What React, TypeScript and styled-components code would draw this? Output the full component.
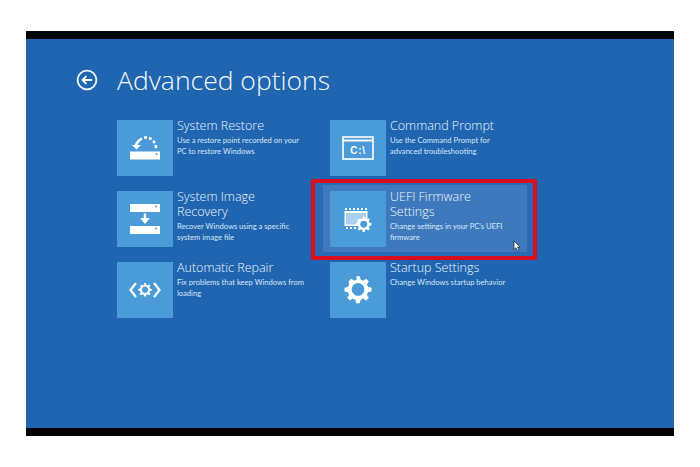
import * as React from 'react';
import styled, { createGlobalStyle } from 'styled-components';

const GlobalStyle = createGlobalStyle`
    html, body {
        margin: 0;
        background: #ffffff;
        font-family: "Open Sans", "Liberation Sans", sans-serif;
    }
`;

const BackIcon = () => (
    <svg width="22" height="22" viewBox="0 0 22 22" fill="none" stroke="#f2f7fc" strokeWidth="1.8">
        <circle cx="11" cy="11" r="9.4" />
        <path d="M16.2 11H6.6M10.4 7l-4 4 4 4" />
    </svg>
);

const RestoreIcon = () => (
    <svg width="32" height="24" viewBox="0 1 32 24" fill="#fff">
        <path d="M1 16.5h30v8H1z" />
        <circle cx="27.5" cy="19" r="0.9" fill="#4a9bd8" />
        <path d="M7.5 14.5 3 10h2.700C6.800 6.500 9.300 3.700 12.500 2.500l1 2.300C11.300 5.700 9.500 7.600 8.600 10h3.400z" />
        <path d="M15 1.200h3v2.500h-3zM20.400 1.800l2.800 1.300-1.100 2.200-2.700-1.200zM25 5l1.900 2.300-2 1.500-1.700-2zM27.600 9.800l.8 3-2.400.6-.7-2.800z" />
    </svg>
);

const ImageRecoveryIcon = () => (
    <svg width="32" height="32" viewBox="0 0 32 32" fill="#fff">
        <path d="M1 1h30v8H1z" />
        <path d="M1 23h30v8H1z" />
        <circle cx="27" cy="3.5" r="0.9" fill="#4a9bd8" />
        <circle cx="27" cy="25.5" r="0.9" fill="#4a9bd8" />
        <path d="M14.800 10.500h2.400v4.500h3.800L16 21l-5-6h3.800z" />
    </svg>
);

const gearPath =
    'M10.4 1h3.200l.6 3a8.500 8.500 0 0 1 2.300 1l2.600-1.700 2.300 2.300-1.700 2.600a8.500 8.500 0 0 1 1 2.300l3 .6v3.200l-3 .6a8.500 8.500 0 0 1-1 2.300l1.700 2.600-2.300 2.300-2.600-1.700a8.500 8.500 0 0 1-2.300 1l-.6 3h-3.200l-.6-3a8.500 8.500 0 0 1-2.300-1l-2.600 1.700-2.300-2.300 1.700-2.600a8.500 8.500 0 0 1-1-2.300l-3-.6v-3.200l3-.6a8.500 8.500 0 0 1 1-2.300L3.800 5.600l2.300-2.300 2.600 1.700a8.500 8.500 0 0 1 2.300-1z M12 7a5.500 5.500 0 1 0 .01 0z';

const RepairIcon = () => (
    <svg width="32" height="18" viewBox="0 0 32 18" fill="none">
        <path d="M7 2 1.500 9 7 16M25 2l5.500 7L25 16" stroke="#fff" strokeWidth="2.200" />
        <svg x="8.500" y="1.500" width="15" height="15" viewBox="0 0 24 26">
            <path d={gearPath} fill="#fff" fillRule="evenodd" />
        </svg>
    </svg>
);

const CommandIcon = () => (
    <svg width="32" height="24" viewBox="0 0 32 24" fill="none">
        <rect x="1" y="1" width="30" height="22" stroke="#fff" strokeWidth="1.600" />
        <path d="M1 4.500h30" stroke="#fff" strokeWidth="2" />
        <text x="16" y="17.500" textAnchor="middle" fill="#fff" fontSize="10" fontWeight="700" letterSpacing="0.800" fontFamily="Liberation Sans, sans-serif">C:\</text>
    </svg>
);

const FirmwareIcon = () => (
    <svg width="28" height="27" viewBox="0 0 28 27" fill="none">
        <path d="M1 2h2v2H1zM5 2h2v2H5zM9 2h2v2H9zM13 2h2v2h-2zM17 2h2v2h-2zM21 2h2v2h-2z" fill="#fff" />
        <path d="M0.500 5h23v10H15v5H0.500z" fill="#fff" />
        <path d="M2 7h20v6.500H13.500v5H2z" fill="#a9d0ee" />
        <path d="M2 21h2v2H2zM6 21h2v2H6zM10 21h2v2h-2z" fill="#fff" />
        <svg x="11.500" y="10" width="16.500" height="17" viewBox="0 0 24 26">
            <path d={gearPath} fill="#fff" fillRule="evenodd" />
        </svg>
    </svg>
);

const GearIcon = () => (
    <svg width="28" height="30" viewBox="0 0 24 26">
        <path d={gearPath} fill="#fff" fillRule="evenodd" />
    </svg>
);

const options = [
    {
        title: 'System Restore',
        text: 'Use a restore point recorded on your PC to restore Windows',
        icon: <RestoreIcon />,
    },
    {
        title: 'Command Prompt',
        text: 'Use the Command Prompt for advanced troubleshooting',
        icon: <CommandIcon />,
    },
    {
        title: 'System Image Recovery',
        text: 'Recover Windows using a specific system image file',
        icon: <ImageRecoveryIcon />,
    },
    {
        title: 'UEFI Firmware Settings',
        text: "Change settings in your PC's UEFI firmware",
        icon: <FirmwareIcon />,
        selected: true,
    },
    {
        title: 'Automatic Repair',
        text: 'Fix problems that keep Windows from loading',
        icon: <RepairIcon />,
    },
    {
        title: 'Startup Settings',
        text: 'Change Windows startup behavior',
        icon: <GearIcon />,
    },
];

const App = () => (
    <>
        <GlobalStyle />
        <Page>
            <Screen>
                <Header>
                    <BackButton>
                        <BackIcon />
                    </BackButton>
                    <Title>Advanced options</Title>
                </Header>
                <OptionGrid>
                    {options.map((option) => (
                        <Option key={option.title} $selected={option.selected}>
                            <Tile>{option.icon}</Tile>
                            <OptionText>
                                <OptionTitle>{option.title}</OptionTitle>
                                <OptionDescription>{option.text}</OptionDescription>
                            </OptionText>
                            {option.selected && (
                                <Cursor width="8" height="12" viewBox="0 0 8 12">
                                    <path d="M1 1v8.500l2-1.800 1.400 3 1.500-.7-1.400-2.900H7z" fill="#fff" stroke="#222" strokeWidth="0.700" />
                                </Cursor>
                            )}
                        </Option>
                    ))}
                </OptionGrid>
            </Screen>
        </Page>
    </>
);

export default App;

const Page = styled.div`
    width: 700px;
    height: 467px;
    padding: 31px 26px 0;
    box-sizing: border-box;
    overflow: hidden;
`;

const Screen = styled.div`
    width: 648px;
    height: 405px;
    box-sizing: border-box;
    border-top: 8px solid #020204;
    border-bottom: 8px solid #020204;
    background: #1f65b0;
    padding: 26px 0 0 50px;
`;

const Header = styled.div`
    display: flex;
    align-items: center;
    height: 30px;
    margin-bottom: 25px;
`;

const BackButton = styled.div`
    display: flex;
    width: 41px;
`;

const Title = styled.h1`
    margin: 0;
    font-size: 26.5px;
    line-height: 30px;
    font-weight: 300;
    color: #f4f8fc;
`;

const OptionGrid = styled.div`
    display: grid;
    grid-template-columns: 213px 213px;
    grid-auto-rows: 56px;
    row-gap: 15px;
    padding-left: 41px;
`;

const Option = styled.div<{ $selected?: boolean }>`
    position: relative;
    display: flex;
    gap: 4px;

    &::before {
        content: '';
        display: ${(props) => (props.$selected ? 'block' : 'none')};
        position: absolute;
        left: -19px;
        top: -12px;
        width: 226px;
        height: 81px;
        box-sizing: border-box;
        padding: 2px 6px 4px 8px;
        border: 4px solid #d90f1f;
        border-radius: 2px;
        background: linear-gradient(#3f79bd, #3f79bd) content-box, #2a6ab4;
    }
`;

const Tile = styled.div`
    position: relative;
    flex: none;
    display: flex;
    align-items: center;
    justify-content: center;
    width: 56px;
    height: 56px;
    background: #4a9bd8;
`;

const OptionText = styled.div`
    position: relative;
    width: 133px;
    margin-top: -2px;
`;

const OptionTitle = styled.div`
    max-width: 112px;
    font-size: 12.5px;
    line-height: 15px;
    font-weight: 300;
    color: #eef5fb;
`;

const OptionDescription = styled.div`
    margin-top: 2px;
    font-family: Lato, "Open Sans", sans-serif;
    font-size: 7.6px;
    line-height: 10.5px;
    color: #d8e8f6;
`;

const Cursor = styled.svg`
    position: absolute;
    left: 183px;
    top: 49px;
`;
